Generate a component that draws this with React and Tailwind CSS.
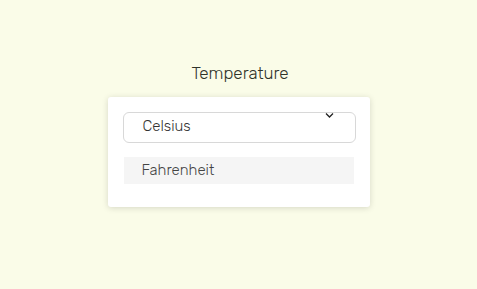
export default function App() {
  return (
    <div className="w-[477px] h-[289px] bg-[#fafce8] flex flex-col items-center pt-[62px] font-light" style={{ fontFamily: '"Rubik", "Inter", "Noto Sans", sans-serif' }}>
      <div className="text-[17px] leading-[23px] text-[#2f332a] ml-[3px]">Temperature</div>
      <div className="mt-[12px] w-[262px] h-[110px] bg-white rounded-[3px] shadow-[0_1px_6px_rgba(0,0,0,0.15)] pt-[15px] px-[15px]">
        <div className="relative h-[31px] w-[233px] border border-[#d8d8d8] rounded-[6px] flex items-center pl-[19px] pb-[2px] text-[15px] text-[#333]">
          Celsius
          <svg className="absolute left-[201px] top-[-1px]" width="9" height="7" viewBox="0 0 9 7" fill="none" stroke="#222" strokeWidth="1.3">
            <path d="M1 1.5 L4.5 5 L8 1.5" />
          </svg>
        </div>
        <div className="mt-[14px] ml-[1px] h-[27px] w-[230px] bg-[#f5f5f5] flex items-center pl-[18px] text-[15px] text-[#444]">
          Fahrenheit
        </div>
      </div>
    </div>
  );
}
